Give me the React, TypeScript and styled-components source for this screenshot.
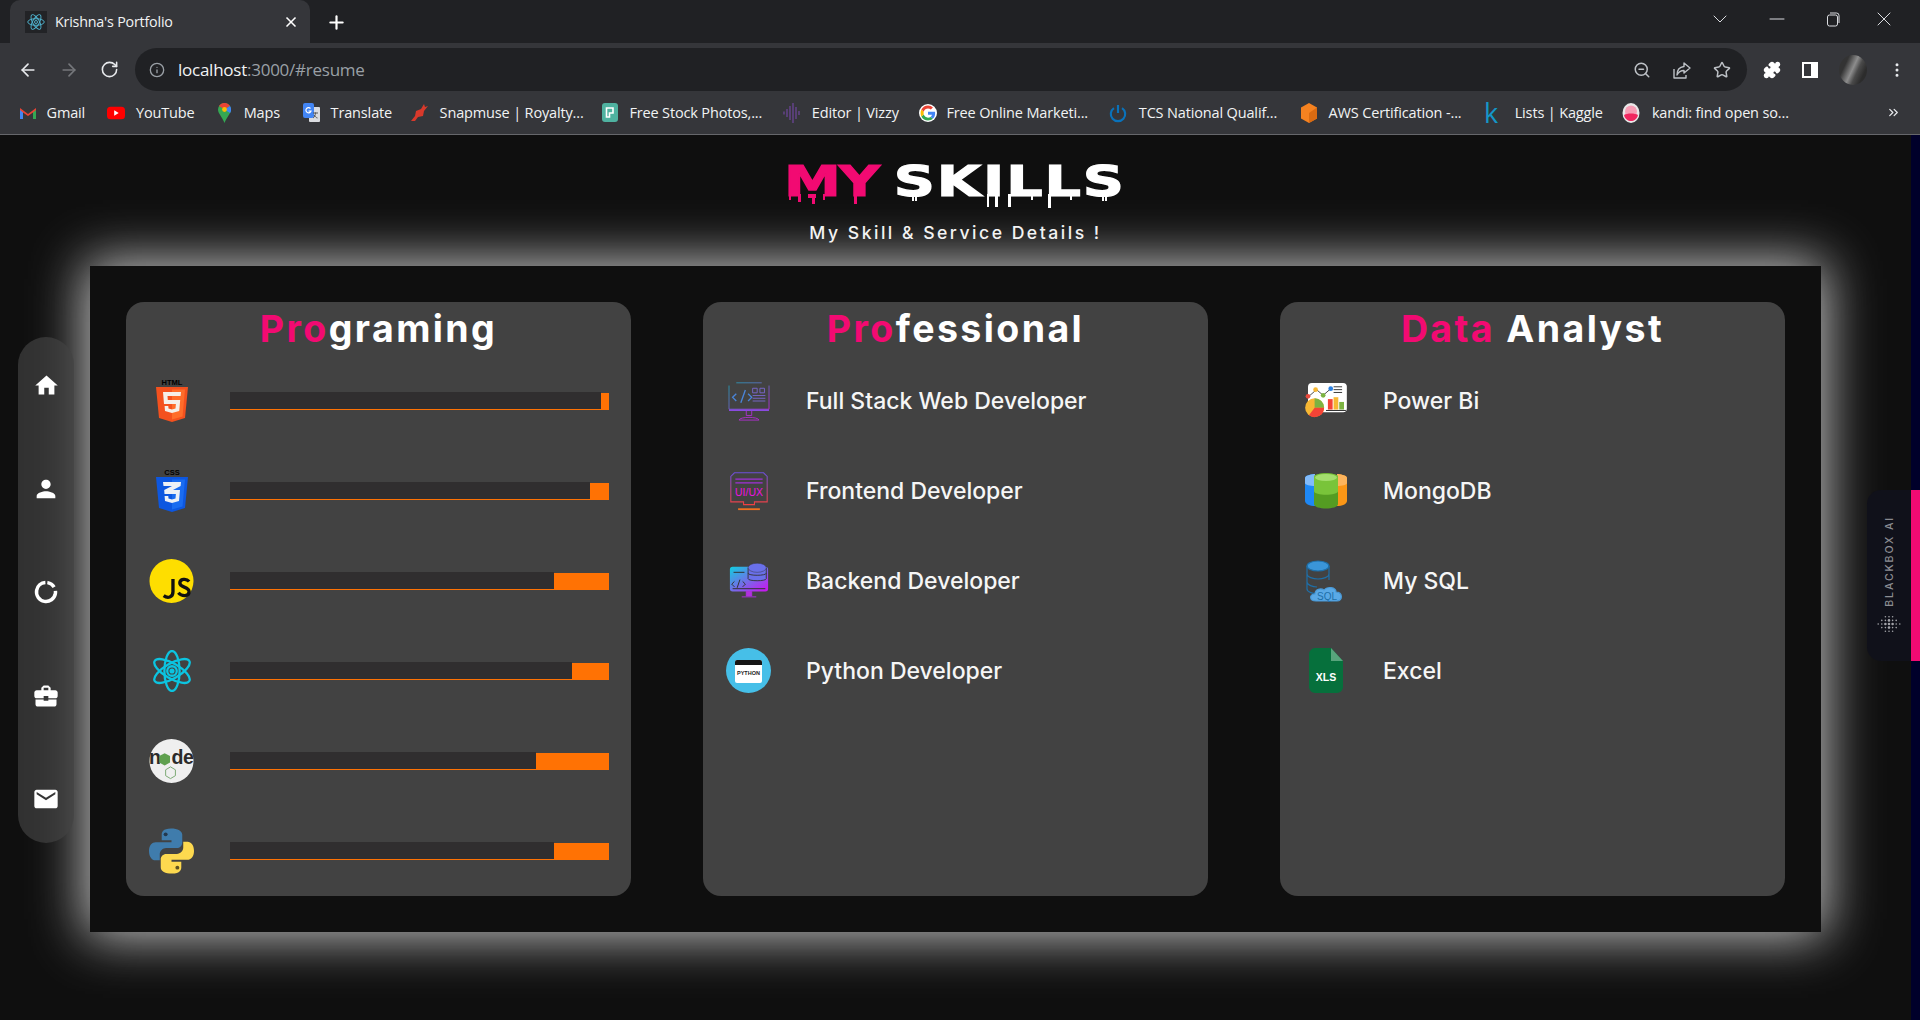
import React from "react";
import styled, { createGlobalStyle } from "styled-components";
import { ArrowLeft, ArrowRight, RotateCw, Info, ZoomOut, Star, Puzzle, MoreVertical, X, Plus, Minus, ChevronDown, ChevronsRight } from "lucide-react";
import { MdHome, MdPerson, MdBusinessCenter, MdEmail } from "react-icons/md";

const pink = "#f20a72";
const orange = "#ff7204";

const GlobalStyle = createGlobalStyle`
  html, body { margin: 0; padding: 0; height: 100%; background: #0f0f0f; overflow: hidden; }
  * { box-sizing: border-box; }
`;

const Shell = styled.div`
  width: 1920px;
  height: 1020px;
  display: flex;
  flex-direction: column;
  position: relative;
  overflow: hidden;
  font-family: Inter, "Open Sans", sans-serif;
`;

/* browser chrome */
const TabStrip = styled.div`
  height: 43px;
  background: #202124;
  display: flex;
  align-items: flex-end;
  padding-left: 10px;
  color: #fff;
  flex: none;
`;
const Tab = styled.div`
  width: 300px;
  height: 43px;
  background: #35363a;
  border-radius: 10px 10px 0 0;
  display: flex;
  align-items: center;
  padding: 0 11px 0 15px;
  gap: 8px;
  font: 14.3px "Open Sans", sans-serif;
  letter-spacing: -0.2px;
`;
const Favicon = styled.div`
  width: 22px;
  height: 22px;
  background: #222326;
  display: flex;
  align-items: center;
  justify-content: center;
  flex: none;
`;
const TabTitle = styled.span`
  flex: 1;
  color: #f1f3f4;
`;
const NewTab = styled.div`
  margin: 0 0 9px 16px;
  height: 24px;
  display: flex;
  align-items: center;
`;
const WindowButtons = styled.div`
  margin-left: auto;
  padding-right: 13px;
  display: flex;
  align-items: center;
  align-self: flex-start;
  height: 38px;
  color: #dadce0;
`;
const WinButton = styled.div<{ $w: number }>`
  width: ${(p) => p.$w}px;
  display: flex;
  justify-content: center;
`;
const Toolbar = styled.div`
  height: 48px;
  background: #35363a;
  display: flex;
  align-items: center;
  flex: none;
  padding: 5px 0 0 18px;
  color: #e8eaed;
`;
const NavButton = styled.div<{ $dim?: boolean }>`
  width: 41px;
  display: flex;
  color: ${(p) => (p.$dim ? "#75777b" : "#e8eaed")};
`;
const Omnibox = styled.div`
  width: 1612px;
  height: 43px;
  margin-left: -6px;
  border-radius: 22px;
  background: #202124;
  display: flex;
  align-items: center;
  padding: 0 16px 0 14px;
  font: 17px "Open Sans", sans-serif;
  letter-spacing: -0.25px;
  color: #9aa0a6;
`;
const InfoSlot = styled.span`
  display: flex;
  margin-right: 13px;
`;
const Host = styled.span`
  color: #f1f3f4;
`;
const OmniIcons = styled.div`
  margin-left: auto;
  display: flex;
  gap: 22px;
  color: #bdc1c6;
`;
const ToolIcons = styled.div`
  display: flex;
  align-items: center;
  margin-left: 16px;
  gap: 21px;
`;
const Avatar = styled.div`
  width: 28px;
  height: 30px;
  border-radius: 50%;
  background: linear-gradient(115deg, #333 25%, #8d8d8d 48%, #4a4a4a 62%, #2c2c2c 80%);
`;
const Bookmarks = styled.div`
  height: 44px;
  background: #35363a;
  border-bottom: 1px solid #66676b;
  display: flex;
  align-items: center;
  padding: 0 14px 0 4px;
  flex: none;
  position: relative;
`;
const Bookmark = styled.div<{ $w: number; $gap: number }>`
  width: ${(p) => p.$w}px;
  flex: none;
  display: flex;
  align-items: center;
  gap: ${(p) => p.$gap}px;
  padding-left: 15px;
  font: 14.5px "Open Sans", sans-serif;
  letter-spacing: -0.15px;
  color: #f1f3f4;
  white-space: nowrap;
`;
const BmIcon = styled.div`
  width: 18px;
  height: 22px;
  flex: none;
  display: flex;
  align-items: center;
  justify-content: center;
`;
const KaggleMark = styled.span`
  color: #1496c8;
  font: 400 27px/22px "Open Sans", sans-serif;
`;
const More = styled.div`
  position: absolute;
  right: 19px;
  top: 13px;
  color: #e8eaed;
`;

/* page */
const Page = styled.main`
  flex: 1;
  background: #0f0f0f;
  display: flex;
  flex-direction: column;
  align-items: center;
  min-height: 0;
  padding-right: 9px;
  position: relative;
`;
const Header = styled.header`
  height: 131px;
  padding-top: 29px;
  display: flex;
  flex-direction: column;
  align-items: center;
  flex: none;
`;
const Title = styled.h1`
  position: relative;
  margin: 0;
  width: 337px;
  height: 36px;
`;
const TitleText = styled.span`
  display: inline-block;
  margin-left: -3px;
  font: 700 42px/36px "DejaVu Sans", sans-serif;
  letter-spacing: 1.4px;
  word-spacing: -4.5px;
  color: #fff;
  -webkit-text-stroke: 1.2px currentColor;
  white-space: nowrap;
  transform: scaleX(1.36);
  transform-origin: left center;
`;
const Pink = styled.span`
  color: ${pink};
`;
const TitlePink = styled(Pink)`
  letter-spacing: -1.5px;
`;
const Drips = styled.svg`
  position: absolute;
  left: 0;
  top: 30px;
  overflow: visible;
`;
const Subtitle = styled.p`
  margin: 21px 0 0;
  font: 500 17.6px/24px Inter, sans-serif;
  letter-spacing: 2.5px;
  color: #f2f2f2;
`;
const Board = styled.section`
  width: 1731px;
  height: 666px;
  background: #0f0f0f;
  box-shadow: 0 0 50px 5px rgba(255, 255, 255, 0.76);
  padding: 36px;
  display: grid;
  grid-template-columns: repeat(3, 505px);
  column-gap: 72px;
  flex: none;
`;
const Card = styled.article`
  height: 594px;
  background: #424242;
  border-radius: 18px;
  padding: 0 23px;
  color: #fff;
`;
const CardTitle = styled.h2`
  margin: 0;
  height: 52px;
  padding-top: 1px;
  text-align: center;
  font: 700 37.5px/52px Inter, sans-serif;
  letter-spacing: 2.4px;
`;
const Rows = styled.div`
  display: flex;
  flex-direction: column;
  padding-top: 24px;
  gap: 45px;
`;
const Row = styled.div`
  height: 45px;
  display: flex;
  align-items: center;
`;
const RowIcon = styled.div`
  width: 45px;
  height: 45px;
  flex: none;
  margin-right: 35px;
  display: flex;
  align-items: center;
  justify-content: center;
`;
const RowLabel = styled.span`
  font: 500 23px/30px Inter, sans-serif;
  color: #f6f6f6;
`;
const Track = styled.div`
  width: 379px;
  height: 17px;
  background: ${orange};
  display: flex;
  flex: none;
  margin: 1px 0 0 1px;
`;
const TrackFill = styled.div`
  height: 17px;
  background: #302e2f;
  margin-top: -1px;
`;

/* floating bits */
const SideNav = styled.nav`
  position: absolute;
  left: 18px;
  top: 202px;
  width: 56px;
  height: 506px;
  border-radius: 28px;
  background: rgba(66, 66, 66, 0.68);
  display: flex;
  flex-direction: column;
  align-items: center;
  justify-content: space-between;
  padding: 34px 0 30px;
  color: #fff;
  z-index: 2;
`;
const NavIcon = styled.div`
  width: 28px;
  height: 28px;
  display: flex;
  align-items: center;
  justify-content: center;
`;
const Blackbox = styled.aside`
  position: absolute;
  right: 9px;
  top: 355px;
  width: 44px;
  height: 171px;
  background: #10111a;
  border-radius: 14px 0 0 14px;
  display: flex;
  flex-direction: column;
  align-items: center;
  justify-content: center;
  gap: 7px;
  z-index: 2;
`;
const BlackboxText = styled.span`
  writing-mode: vertical-rl;
  transform: rotate(180deg);
  font: 500 10.5px Inter, sans-serif;
  letter-spacing: 1.9px;
  color: #8d8e93;
  white-space: nowrap;
`;
const PinkBar = styled.div`
  position: absolute;
  right: 0;
  top: 355px;
  width: 9px;
  height: 171px;
  background: ${pink};
  z-index: 2;
`;
const EdgeStrip = styled.div`
  position: absolute;
  right: 0;
  top: 0;
  bottom: 0;
  width: 9px;
  background: #00002a;
  z-index: 1;
`;

const ReactLogo = ({ size, color }: { size: number; color: string }) => (
  <svg width={size} height={size} viewBox="-12 -12 24 24" fill="none" stroke={color} strokeWidth="1.25">
    <ellipse rx="11" ry="4.4" />
    <ellipse rx="11" ry="4.4" transform="rotate(60)" />
    <ellipse rx="11" ry="4.4" transform="rotate(120)" />
    <circle r="2" />
  </svg>
);

const marks: Record<string, React.ReactNode> = {
  gmail: (
    <svg width="18" height="14" viewBox="0 0 18 14">
      <path d="M1 13V2l8 6 8-6v11h-3V6.500L9 10 4 6.500V13z" fill="#ea4335" />
      <path d="M1 13h3V6.500L1 4z" fill="#4285f4" />
      <path d="M14 13h3V4l-3 2.500z" fill="#34a853" />
    </svg>
  ),
  youtube: (
    <svg width="20" height="14" viewBox="0 0 20 14">
      <rect width="20" height="14" rx="4" fill="#f00" />
      <path d="M8 4l5 3-5 3z" fill="#fff" />
    </svg>
  ),
  maps: (
    <svg width="13" height="20" viewBox="0 0 13 20">
      <path d="M6.500 0a6.500 6.500 0 0 1 6.500 6.500c0 4-4 7-6.500 13.500C4 13.500 0 10.500 0 6.500A6.500 6.500 0 0 1 6.500 0z" fill="#34a853" />
      <path d="M1 3a6.500 6.500 0 0 1 11 0L6.500 6.500z" fill="#ea4335" />
      <path d="M12 3a6.500 6.500 0 0 1 0 7L6.500 6.500z" fill="#4285f4" />
      <circle cx="6.500" cy="6.500" r="2.400" fill="#fbbc04" />
    </svg>
  ),
  translate: (
    <svg width="17" height="20" viewBox="0 0 17 20">
      <rect x="6" y="4" width="11" height="15" rx="1" fill="#dadce0" />
      <rect width="11" height="15" rx="2" fill="#4285f4" />
      <path d="M7.500 5.500a2.600 2.600 0 1 0 .5 2.500H5.500" stroke="#fff" fill="none" strokeWidth="1.200" />
      <path d="M10 10h5M12.500 9.500c0 3-1.500 5-2.500 5.500M11 12c1 1.500 2.500 3 3.500 3" stroke="#555" fill="none" />
    </svg>
  ),
  snapmuse: (
    <svg width="18" height="18" viewBox="0 0 18 18">
      <path d="M0 17l4-5 1-5 5-2 3-5 1 3 3-1-4 5-1 5-5 1-3 4z" fill="#d8392b" />
    </svg>
  ),
  stock: (
    <svg width="16" height="19" viewBox="0 0 16 19">
      <rect width="16" height="19" rx="3" fill="#4fb2a0" />
      <path d="M4.500 14V5H11v5H7.500v4z" fill="none" stroke="#fff" strokeWidth="1.600" />
    </svg>
  ),
  vizzy: (
    <svg width="18" height="20" viewBox="0 0 18 20" stroke="#6b4696" strokeWidth="1.300">
      <path d="M1 8.500v3M4 6v8M7 3v14M10 0v20M13 4v12M16 8v4" />
    </svg>
  ),
  google: (
    <svg width="20" height="20" viewBox="0 0 48 48">
      <circle cx="24" cy="24" r="24" fill="#fff" />
      <path d="M43 24.500c0-1.400-.1-2.700-.4-4H24v8h10.700c-.5 2.500-1.900 4.600-4 6l6.300 4.900c3.700-3.400 6-8.500 6-14.900z" fill="#4285f4" />
      <path d="M24 44c5.400 0 9.900-1.800 13-4.600l-6.300-4.900c-1.800 1.200-4 1.900-6.700 1.900-5.200 0-9.600-3.500-11.200-8.200l-6.500 5C9.600 39.600 16.300 44 24 44z" fill="#34a853" />
      <path d="M12.800 28.200c-.8-2.500-.8-5.900 0-8.400l-6.500-5c-2.800 5.500-2.800 12.900 0 18.400z" fill="#fbbc05" />
      <path d="M24 11.900c3 0 5.600 1 7.600 3l5.600-5.600C33.800 6.100 29.400 4 24 4 16.300 4 9.600 8.400 6.300 14.800l6.500 5c1.600-4.700 6-7.900 11.200-7.900z" fill="#ea4335" />
    </svg>
  ),
  tcs: (
    <svg width="20" height="20" viewBox="0 0 20 20" fill="none" stroke="#0a72ba" strokeWidth="2.400">
      <path d="M10 1v9M5.500 4.500a8 8 0 1 0 9 0" />
    </svg>
  ),
  aws: (
    <svg width="18" height="20" viewBox="0 0 16 20">
      <path d="M8 0l8 4.500v11L8 20l-8-4.500v-11z" fill="#f58220" />
      <path d="M8 10l8-5.500v11L8 20z" fill="#d96b12" />
    </svg>
  ),
  kaggle: <KaggleMark>k</KaggleMark>,
  kandi: (
    <svg width="20" height="22" viewBox="0 0 18 20">
      <ellipse cx="9" cy="10" rx="8.500" ry="10" fill="#e8e8e8" />
      <circle cx="9" cy="8.500" r="6" fill="#f79cb4" />
      <path d="M2 12c3-2 11-2 14 0-1 4-4 6-7 6s-6-2-7-6z" fill="#f0265f" />
    </svg>
  ),
};

const bookmarks = [
  { icon: "gmail", text: "Gmail", w: 88, gap: 9.5 },
  { icon: "youtube", text: "YouTube", w: 108, gap: 11 },
  { icon: "maps", text: "Maps", w: 87, gap: 10.7 },
  { icon: "translate", text: "Translate", w: 109, gap: 10.6 },
  { icon: "snapmuse", text: "Snapmuse | Royalty...", w: 190, gap: 10.6 },
  { icon: "stock", text: "Free Stock Photos,...", w: 182, gap: 10.4 },
  { icon: "vizzy", text: "Editor | Vizzy", w: 136, gap: 10.8 },
  { icon: "google", text: "Free Online Marketi...", w: 190, gap: 9.5 },
  { icon: "tcs", text: "TCS National Qualif...", w: 191, gap: 11.8 },
  { icon: "aws", text: "AWS Certification -...", w: 182, gap: 10.6 },
  { icon: "kaggle", text: "Lists | Kaggle", w: 140, gap: 14.7 },
  { icon: "kandi", text: "kandi: find open so...", w: 200, gap: 11.9 },
];

const Shield = ({ fill, dark, label, digit }: { fill: string; dark: string; label: string; digit: React.ReactNode }) => (
  <svg width="34" height="46" viewBox="0 0 34 46">
    <text x="17" y="7" textAnchor="middle" fontFamily="Liberation Sans, sans-serif" fontWeight="700" fontSize="7.500" fill="#000">{label}</text>
    <path d="M1 9h32l-3 31-13 4-13-4z" fill={fill} />
    <path d="M17 11.500v30l10.500-3L30 11.500z" fill={dark} />
    {digit}
  </svg>
);

const logos: React.ReactNode[] = [
  <Shield key="h" fill="#f4511e" dark="#ff6d2a" label="HTML" digit={<path d="M8 14h18l-.4 4H12.500l.3 4h12.400l-1 11L17 35l-7-2-.4-5h3.700l.2 2.500L17 31.500l3.500-1 .4-4.500H9z" fill="#f5efe9" />} />,
  <Shield key="c" fill="#0d57e0" dark="#1a6cf0" label="CSS" digit={<path d="M8 14h18l-.4 4-7.600 4h7l-1 11L17 35l-7-2-.4-5h3.700l.2 2.500L17 31.500l3.500-1 .4-4.500H9.500l-.3-4 7.800-4H8.500z" fill="#eef1f6" />} />,
  <svg key="j" width="46" height="46" viewBox="0 0 46 46">
    <circle cx="23" cy="23" r="22.500" fill="#fede00" />
    <path d="M24.500 21v13c0 6-5.500 7-9.500 4" fill="none" stroke="#111" strokeWidth="3.400" />
    <path d="M41 23.500c-3-3.500-9.500-2.500-9.500 1.500 0 5 9.500 3.500 9.500 9 0 5-7.500 5-11 1" fill="none" stroke="#111" strokeWidth="3.400" />
  </svg>,
  <svg key="r" width="40" height="42" viewBox="-21 -22 42 44" fill="none" stroke="#0cc4e0" strokeWidth="2.400">
    <ellipse rx="21" ry="8" transform="rotate(30)" />
    <ellipse rx="21" ry="8" transform="rotate(90)" />
    <ellipse rx="21" ry="8" transform="rotate(150)" />
    <circle r="5" />
    <circle r="1.500" fill="#0cc4e0" />
  </svg>,
  <svg key="n" width="46" height="46" viewBox="0 0 46 46">
    <circle cx="23" cy="23" r="22.500" fill="#efefef" />
    <text x="0" y="26" fontFamily="Liberation Sans, sans-serif" fontWeight="700" fontSize="20" fill="#2b2b2b">n</text>
    <path d="M16 15l5.500 3v6.500L16 27.500l-5.500-3V18z" fill="#5fa04e" />
    <text x="23" y="26" fontFamily="Liberation Sans, sans-serif" fontWeight="700" fontSize="20" fill="#2b2b2b" letterSpacing="-0.500">de</text>
    <path d="M22 29l5 3v6l-5 3-5-3v-6z" fill="none" stroke="#7aa873" />
  </svg>,
  <svg key="p" width="46" height="46" viewBox="0 0 46 46">
    <path d="M22.500 0C14 0 13 4 13 6.500V12h10v2H7c-4 0-7 3-7 9s3 9.500 6.500 9.500H11v-6c0-3.500 3-6.500 6.500-6.500h11c3 0 5.500-2.500 5.500-5.500v-8C34 2.500 29.500 0 22.500 0z" fill="#3f7cac" />
    <path d="M23.500 46c8.500 0 9.500-4 9.500-6.500V34H23v-2h16c4 0 7-3 7-9s-3-9.500-6.500-9.500H35v6c0 3.500-3 6.500-6.500 6.500h-11c-3 0-5.500 2.500-5.500 5.500v8c0 4 4.500 6.500 11.500 6.500z" fill="#fdd94f" />
    <circle cx="17" cy="6" r="2" fill="#23384d" />
    <circle cx="29" cy="40" r="2" fill="#5e5221" />
  </svg>,
];

const skills = [2, 5, 14.5, 9.8, 19.2, 14.5];

const fullStack = (
  <svg width="44" height="40" viewBox="0 0 46 44" fill="none" strokeWidth="1">
    <defs>
      <linearGradient id="gs" x1="0" y1="0" x2="1" y2="1"><stop offset="0" stopColor="#1f9fb0" /><stop offset="1" stopColor="#b52ad2" /></linearGradient>
    </defs>
    <path d="M1 5v26h44V5M9 2h28" stroke="url(#gs)" />
    <path d="M1 32h44" stroke="#8a4be0" strokeWidth="2" />
    <path d="M9 14l-4 4 4 4M19 10l-5 14M22 14l4 4-4 4" stroke="#4a84d8" strokeWidth="1.500" />
    <path d="M27 8h5v5h-5zM35 8h5v5h-5zM27 16h14M27 19h14M27 22h14" stroke="#7a68d0" />
    <path d="M20 33v5h6v-5M12 43c1-4 21-4 22 0z" stroke="#b030d0" />
  </svg>
);
const uiux = (
  <svg width="40" height="42" viewBox="0 0 44 44" fill="none">
    <defs>
      <linearGradient id="gu" x1="0" y1="0" x2="0" y2="1"><stop offset="0" stopColor="#6c4fd8" /><stop offset="1" stopColor="#f04040" /></linearGradient>
    </defs>
    <path d="M6 2h32l4 4v28H28v3H16v-3H2V6z" stroke="url(#gu)" strokeWidth="1.200" />
    <path d="M7 9h30M7 13h30" stroke="#a030d8" strokeWidth="1.300" />
    <text x="22" y="27" textAnchor="middle" fontFamily="Liberation Sans, sans-serif" fontSize="11.500" fill="#f010e0">UI/UX</text>
    <path d="M10 42h24" stroke="#f07020" strokeWidth="2" />
  </svg>
);
const backend = (
  <svg width="40" height="37" viewBox="0 0 44 40">
    <defs>
      <linearGradient id="gb" x1="0" y1="0" x2="1" y2="1"><stop offset="0" stopColor="#10cfe0" /><stop offset="1" stopColor="#d010f0" /></linearGradient>
    </defs>
    <rect x="1" y="5" width="42" height="27" rx="3" fill="url(#gb)" />
    <path d="M19 32h6v5h-6zM14 38h16" stroke="#b030e0" fill="#b030e0" />
    <path d="M5 11h12M6 21l-3 3 3 3M15 21l3 3-3 3M12 19l-3 9M4 29h36" stroke="#333" strokeWidth="1.100" fill="none" />
    <path d="M21 6v12c0 3 20 3 20 0V6" fill="#6a70ea" stroke="#333" />
    <ellipse cx="31" cy="6" rx="10" ry="5" fill="#6a70ea" stroke="#333" strokeWidth="0.5" />
    <path d="M21 12c0 3 20 3 20 0" stroke="#333" fill="none" />
  </svg>
);
const pythonDev = (
  <svg width="45" height="45" viewBox="0 0 45 45">
    <circle cx="22.500" cy="22.500" r="22.500" fill="#46bfe8" />
    <rect x="9" y="12" width="27" height="23" rx="2" fill="#fff" />
    <path d="M9 14a2 2 0 0 1 2-2h23a2 2 0 0 1 2 2v3H9z" fill="#151515" />
    <text x="22.500" y="27" textAnchor="middle" fontFamily="Liberation Sans, sans-serif" fontWeight="700" fontSize="5.500" fill="#222">PYTHON</text>
  </svg>
);
const powerBi = (
  <svg width="42" height="36" viewBox="0 0 44 38">
    <rect x="3" y="0" width="41" height="31" rx="4" fill="#fff" />
    <path d="M4 14l8-7 7 6 8-7" stroke="#444" fill="none" />
    <circle cx="3" cy="14" r="2.500" fill="#e84a3d" />
    <circle cx="11" cy="7" r="2.500" fill="#f7b733" />
    <circle cx="19" cy="13" r="2.500" fill="#7cb342" />
    <circle cx="27" cy="6" r="2.500" fill="#2b80e0" />
    <path d="M30 4h9M30 7h9M30 10h9" stroke="#333" />
    <rect x="24" y="17" width="5" height="11" fill="#f44336" />
    <rect x="30" y="15" width="5" height="13" fill="#f7b733" />
    <rect x="36" y="20" width="5" height="8" fill="#7cb342" />
    <path d="M22 29h21" stroke="#222" />
    <circle cx="10" cy="26" r="10" fill="#f7b733" />
    <path d="M10 16a10 10 0 0 1 10 10H10z" fill="#7cb342" />
    <path d="M10 26h10a10 10 0 0 1-16 8z" fill="#f44336" />
  </svg>
);
const mongo = (
  <svg width="42" height="36" viewBox="0 0 42 36">
    <path d="M0 5c0-3 8-4 10-4v32C5 33 0 31 0 28z" fill="#1e88f5" />
    <path d="M0 5c0-3 8-4 10-4v12c-5 0-10-1-10-3z" fill="#82bbfa" />
    <path d="M42 5c0-3-8-4-10-4v32c5 0 10-2 10-5z" fill="#fb9616" />
    <path d="M42 5c0-3-8-4-10-4v12c5 0 10-1 10-3z" fill="#fdb45c" />
    <path d="M9 4c0-5 24-5 24 0v27c0 6-24 6-24 0z" fill="#549c22" />
    <path d="M9 4c0-5 24-5 24 0v14c0 5-24 5-24 0z" fill="#79c43a" />
    <ellipse cx="21" cy="4.500" rx="11" ry="3.500" fill="#a4de6e" />
  </svg>
);
const mysql = (
  <svg width="42" height="44" viewBox="0 0 42 44" fill="none" stroke="#1e6fa8" strokeWidth="1.200">
    <ellipse cx="13" cy="7" rx="11" ry="5" fill="#3a95d8" />
    <path d="M2 7v23c0 3 6 5 12 5M24 7v14M2 15c0 3 6 5 11 5s11-2 11-5M2 23c0 3 6 5 10 5" />
    <path d="M11 42c-7 0-7-7-1-7 0-5 6-6 9-4 3-4 12-3 12 2 7 0 7 9 1 9z" fill="#5aa9e6" stroke="#4a9ad8" />
    <text x="22" y="41" textAnchor="middle" fontFamily="Liberation Sans, sans-serif" fontSize="10" fill="#1e6fa8" stroke="none">SQL</text>
  </svg>
);
const excel = (
  <svg width="34" height="45" viewBox="0 0 34 45">
    <path d="M6 0h16l12 13v26c0 3-3 6-6 6H6c-3 0-6-3-6-6V6c0-3 3-6 6-6z" fill="#06703c" />
    <path d="M22 0l12 13H22z" fill="#58a47c" />
    <text x="17" y="33" textAnchor="middle" fontFamily="Liberation Sans, sans-serif" fontWeight="700" fontSize="10.500" fill="#fff">XLS</text>
  </svg>
);

const DripMarks = () => (
  <Drips width="337" height="20" fill="#fff">
    <g fill={pink}>
      <rect x="2" y="0" width="2" height="6" />
      <rect x="11" y="0" width="3" height="8" />
      <rect x="21" y="0" width="8" height="4" />
      <rect x="25" y="0" width="3" height="10" />
      <rect x="36" y="0" width="2" height="6" />
      <rect x="67" y="0" width="3" height="10" />
    </g>
    <rect x="125" y="0" width="2" height="7" />
    <rect x="128" y="0" width="2" height="7" />
    <path d="M200 0h2v13h-2zM208 0h3v13h-3zM200 0h11v2h-11z" />
    <rect x="221" y="0" width="3" height="13" />
    <rect x="244" y="0" width="2" height="6" />
    <rect x="261" y="0" width="3" height="14" />
    <rect x="283" y="0" width="2" height="6" />
    <rect x="315" y="0" width="2" height="7" />
    <rect x="318" y="0" width="2" height="7" />
  </Drips>
);

const Dots = () => {
  const dots: React.ReactNode[] = [];
  [-9, -4.5, 0, 4.5, 9].forEach((y, i) => {
    const r = [4.5, 9, 13.5, 9, 4.5][i];
    for (let x = -r; x <= r; x += 4.5) {
      dots.push(<circle key={`${x}-${y}`} cx={x} cy={y} r={Math.abs(y) + Math.abs(x) < 9 ? 1.6 : 1} />);
    }
  });
  return (
    <svg width="24" height="22" viewBox="-15 -13 30 26" fill="#a3a4a9">
      {dots}
    </svg>
  );
};

const ServiceRow = ({ icon, label }: { icon: React.ReactNode; label: string }) => (
  <Row>
    <RowIcon>{icon}</RowIcon>
    <RowLabel>{label}</RowLabel>
  </Row>
);

export default function App() {
  return (
    <Shell>
      <GlobalStyle />
      <TabStrip>
        <Tab>
          <Favicon><ReactLogo size={18} color="#4fb3cf" /></Favicon>
          <TabTitle>Krishna's Portfolio</TabTitle>
          <X size={16} strokeWidth={2.5} />
        </Tab>
        <NewTab><Plus size={21} strokeWidth={2.5} /></NewTab>
        <WindowButtons>
          <WinButton $w={56}><ChevronDown size={24} strokeWidth={1} /></WinButton>
          <WinButton $w={58}><Minus size={24} strokeWidth={1} /></WinButton>
          <WinButton $w={54}><svg width="14" height="15" viewBox="0 0 14 15" fill="none" stroke="#dadce0"><rect x="1.5" y="3" width="10" height="11" rx="2" /><path d="M4 1h6.500A2.500 2.500 0 0 1 13 3.500V11" /></svg></WinButton>
          <WinButton $w={47}><X size={24} strokeWidth={1} /></WinButton>
        </WindowButtons>
      </TabStrip>
      <Toolbar>
        <NavButton><ArrowLeft size={20} /></NavButton>
        <NavButton $dim><ArrowRight size={20} /></NavButton>
        <NavButton><RotateCw size={19} /></NavButton>
        <Omnibox>
          <InfoSlot><Info size={16} /></InfoSlot>
          <Host>localhost</Host>:3000/#resume
          <OmniIcons>
            <ZoomOut size={18} />
            <svg width="18" height="18" viewBox="0 0 18 18" fill="none" stroke="currentColor" strokeWidth="1.400" strokeLinejoin="round">
              <path d="M1 8v9h12v-3" />
              <path d="M11 2l6 5-6 5V9.500C8 9.500 5.500 11 4 14c0-5 3-8 7-8.500z" />
            </svg>
            <Star size={18} />
          </OmniIcons>
        </Omnibox>
        <ToolIcons>
          <Puzzle size={18} fill="#fff" color="#fff" />
          <svg width="16" height="16" viewBox="0 0 16 16"><path d="M0 0h16v16H0zM2 2v12h7V2z" fill="#fff" fillRule="evenodd" /></svg>
          <Avatar />
          <MoreVertical size={18} />
        </ToolIcons>
      </Toolbar>
      <Bookmarks>
        {bookmarks.map((b) => (
          <Bookmark key={b.text} $w={b.w} $gap={b.gap}>
            <BmIcon>{marks[b.icon]}</BmIcon>
            {b.text}
          </Bookmark>
        ))}
        <More><ChevronsRight size={15} /></More>
      </Bookmarks>
      <Page>
        <Header>
          <Title>
            <TitleText><TitlePink>MY</TitlePink> SKILLS</TitleText>
            <DripMarks />
          </Title>
          <Subtitle>My Skill &amp; Service Details !</Subtitle>
        </Header>
        <Board>
          <Card>
            <CardTitle><Pink>Pro</Pink>graming</CardTitle>
            <Rows>
              {skills.map((gap, i) => (
                <Row key={i}>
                  <RowIcon>{logos[i]}</RowIcon>
                  <Track>
                    <TrackFill style={{ width: `${100 - gap}%` }} />
                  </Track>
                </Row>
              ))}
            </Rows>
          </Card>
          <Card>
            <CardTitle><Pink>Pro</Pink>fessional</CardTitle>
            <Rows>
              <ServiceRow icon={fullStack} label="Full Stack Web Developer" />
              <ServiceRow icon={uiux} label="Frontend Developer" />
              <ServiceRow icon={backend} label="Backend Developer" />
              <ServiceRow icon={pythonDev} label="Python Developer" />
            </Rows>
          </Card>
          <Card>
            <CardTitle><Pink>Data</Pink> Analyst</CardTitle>
            <Rows>
              <ServiceRow icon={powerBi} label="Power Bi" />
              <ServiceRow icon={mongo} label="MongoDB" />
              <ServiceRow icon={mysql} label="My SQL" />
              <ServiceRow icon={excel} label="Excel" />
            </Rows>
          </Card>
        </Board>
        <SideNav>
          <NavIcon><MdHome size={27} /></NavIcon>
          <NavIcon><MdPerson size={28} /></NavIcon>
          <NavIcon>
            <svg width="24" height="24" viewBox="0 0 24 24" fill="none" stroke="#fff" strokeWidth="3.5">
              <circle cx="12" cy="12" r="9.5" strokeDasharray="8 4 45 2" transform="rotate(-80 12 12)" />
            </svg>
          </NavIcon>
          <NavIcon><MdBusinessCenter size={28} /></NavIcon>
          <NavIcon><MdEmail size={28} /></NavIcon>
        </SideNav>
        <EdgeStrip />
        <Blackbox>
          <BlackboxText>BLACKBOX AI</BlackboxText>
          <Dots />
        </Blackbox>
        <PinkBar />
      </Page>
    </Shell>
  );
}
